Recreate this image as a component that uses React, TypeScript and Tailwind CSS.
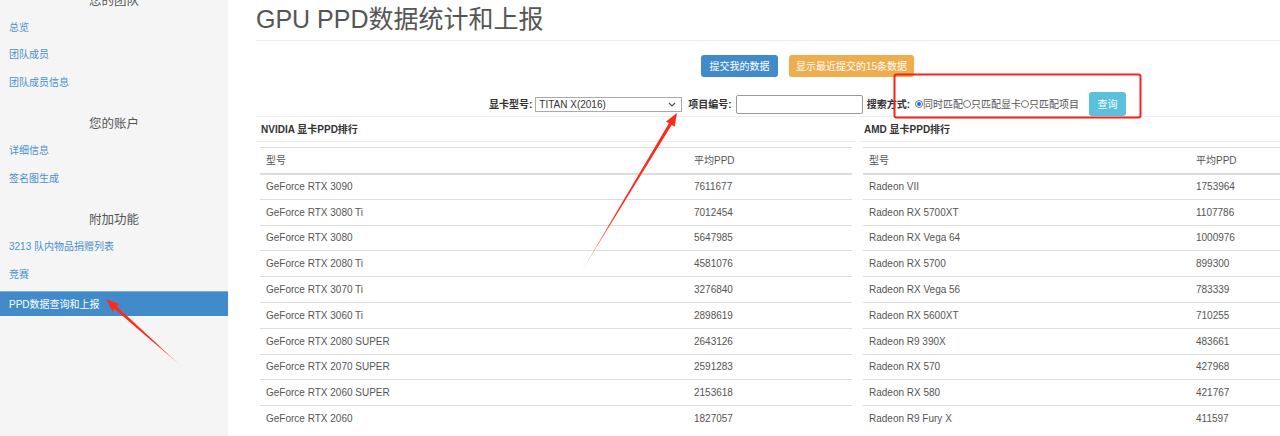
import React from 'react';

const font = { fontFamily: '"Liberation Sans", "Noto Sans CJK SC", sans-serif' };

const nvidia = [
  ['GeForce RTX 3090', '7611677'],
  ['GeForce RTX 3080 Ti', '7012454'],
  ['GeForce RTX 3080', '5647985'],
  ['GeForce RTX 2080 Ti', '4581076'],
  ['GeForce RTX 3070 Ti', '3276840'],
  ['GeForce RTX 3060 Ti', '2898619'],
  ['GeForce RTX 2080 SUPER', '2643126'],
  ['GeForce RTX 2070 SUPER', '2591283'],
  ['GeForce RTX 2060 SUPER', '2153618'],
  ['GeForce RTX 2060', '1827057'],
];

const amd = [
  ['Radeon VII', '1753964'],
  ['Radeon RX 5700XT', '1107786'],
  ['Radeon RX Vega 64', '1000976'],
  ['Radeon RX 5700', '899300'],
  ['Radeon RX Vega 56', '783339'],
  ['Radeon RX 5600XT', '710255'],
  ['Radeon R9 390X', '483661'],
  ['Radeon RX 570', '427968'],
  ['Radeon RX 580', '421767'],
  ['Radeon R9 Fury X', '411597'],
];

function SideHead({ children }: { children: React.ReactNode }) {
  return <div className="h-[41px] pt-[18px] text-center text-[12.5px] leading-[20px] text-[#555]">{children}</div>;
}

function SideLink({ children }: { children: React.ReactNode }) {
  return <div className="h-[27.5px] flex items-center px-[9px] text-[10px] text-[#4a90d0]">{children}</div>;
}

function Radio({ checked }: { checked?: boolean }) {
  return (
    <span className="inline-flex w-[8px] h-[8px] rounded-full border border-[#767676] items-center justify-center bg-white">
      {checked && <span className="w-[4px] h-[4px] rounded-full bg-[#0075ff]" />}
    </span>
  );
}

function Panel({ title, rows, col, className }: { title: string; rows: string[][]; col: string; className: string }) {
  return (
    <div className={className}>
      <div className="h-[26px] border-y border-[#eee] flex items-center px-[5px] text-[10px] font-bold text-[#333]">{title}</div>
      <table className="mx-[4px] mt-[5px] w-[calc(100%-8px)] border-collapse text-[10px] text-[#555]">
        <thead>
          <tr className="h-[26px] border-t border-[#ddd] border-b-2">
            <td className={`pl-[6px] ${col}`}>型号</td>
            <td>平均PPD</td>
          </tr>
        </thead>
        <tbody>
          {rows.map(([n, v]) => (
            <tr key={n} className="h-[25.8px] border-t border-[#ddd]">
              <td className="pl-[6px]">{n}</td>
              <td>{v}</td>
            </tr>
          ))}
        </tbody>
      </table>
    </div>
  );
}

function arrow(x1: number, y1: number, x2: number, y2: number) {
  const dx = x2 - x1;
  const dy = y2 - y1;
  const l = Math.hypot(dx, dy);
  const ux = dx / l;
  const uy = dy / l;
  const nx = -uy;
  const ny = ux;
  const bx = x2 - 13 * ux;
  const by = y2 - 13 * uy;
  const p = (x: number, y: number) => `${x.toFixed(1)},${y.toFixed(1)}`;
  return [
    p(x1, y1),
    p(bx - 1.6 * nx, by - 1.6 * ny),
    p(bx - 5 * nx, by - 5 * ny),
    p(x2, y2),
    p(bx + 5 * nx, by + 5 * ny),
    p(bx + 1.6 * nx, by + 1.6 * ny),
  ].join(' ');
}

export default function App() {
  return (
    <div className="relative w-[1280px] h-[436px] overflow-hidden flex bg-white" style={font}>
      <aside className="w-[228px] shrink-0 bg-[#f5f5f5]">
        <div className="-mt-[27.5px]">
          <SideHead>您的团队</SideHead>
          <SideLink>总览</SideLink>
          <SideLink>团队成员</SideLink>
          <SideLink>团队成员信息</SideLink>
          <SideHead>您的账户</SideHead>
          <SideLink>详细信息</SideLink>
          <SideLink>签名图生成</SideLink>
          <SideHead>附加功能</SideHead>
          <SideLink>3213 队内物品捐赠列表</SideLink>
          <SideLink>竞赛</SideLink>
          <div className="mt-[3px] h-[25px] flex items-center px-[9px] text-[10px] text-white bg-[#428bca] border-t border-[#7fb0de]">
            PPD数据查询和上报
          </div>
        </div>
      </aside>

      <main className="shrink-0 w-[1103px] ml-[28px]">
        <h1 className="h-[41px] flex items-center border-b border-[#eee] text-[25px] text-[#555] font-normal pb-[1px]">
          GPU PPD数据统计和上报
        </h1>
        <div className="mt-[14px] flex justify-center gap-[11px] text-[10px] text-white">
          <button className="h-[22px] w-[77px] rounded-[3px] bg-[#428bca]">提交我的数据</button>
          <button className="h-[22px] w-[125px] rounded-[3px] bg-[#f0ad4e]">显示最近提交的15条数据</button>
        </div>
        <div className="mt-[15px] h-[24px] flex justify-center items-center text-[10px] text-[#333]">
          <span className="font-bold mr-[3px]">显卡型号:</span>
          <div className="relative w-[147px] h-[15px] border border-[#aaa] bg-white flex items-center pl-[3px] text-[#333]">
            TITAN X(2016)
            <svg className="absolute right-[5px] top-[4px]" width="8" height="5" viewBox="0 0 8 5">
              <path d="M1 1l3 3 3-3" fill="none" stroke="#555" strokeWidth="1.2" />
            </svg>
          </div>
          <span className="font-bold ml-[6px] mr-[4px]">项目编号:</span>
          <div className="w-[127px] h-[19px] border border-[#999] rounded-[2px] bg-white" />
          <span className="font-bold ml-[4px] mr-[5px]">搜索方式:</span>
          <span className="flex items-center text-[#555]">
            <Radio checked />
            同时匹配
            <Radio />
            只匹配显卡
            <Radio />
            只匹配项目
          </span>
          <button className="ml-[10px] w-[37px] h-[24px] rounded-[3px] bg-[#5bc0de] text-white">查询</button>
        </div>
        <div className="flex gap-[3px]">
          <Panel title="NVIDIA 显卡PPD排行" rows={nvidia} col="w-[434px]" className="w-[600px] shrink-0" />
          <Panel title="AMD 显卡PPD排行" rows={amd} col="w-[333px]" className="w-[500px] shrink-0" />
        </div>
      </main>

      <svg className="absolute inset-0 pointer-events-none" width="1280" height="436">
        <defs>
          <linearGradient id="a1" gradientUnits="userSpaceOnUse" x1="580" y1="274" x2="677" y2="113">
            <stop offset="0" stopColor="#ff2a1a" stopOpacity="0.2" />
            <stop offset="0.35" stopColor="#ff2a1a" stopOpacity="1" />
          </linearGradient>
          <linearGradient id="a2" gradientUnits="userSpaceOnUse" x1="181" y1="366" x2="106" y2="299">
            <stop offset="0" stopColor="#ff2a1a" stopOpacity="0.2" />
            <stop offset="0.35" stopColor="#ff2a1a" stopOpacity="1" />
          </linearGradient>
        </defs>
        <rect x="894.5" y="74.5" width="246" height="43" rx="2" fill="none" stroke="#f5221b" strokeWidth="2" />
        <polygon points={arrow(580, 274, 677, 113)} fill="url(#a1)" />
        <polygon points={arrow(181, 366, 106, 299)} fill="url(#a2)" />
      </svg>
    </div>
  );
}
